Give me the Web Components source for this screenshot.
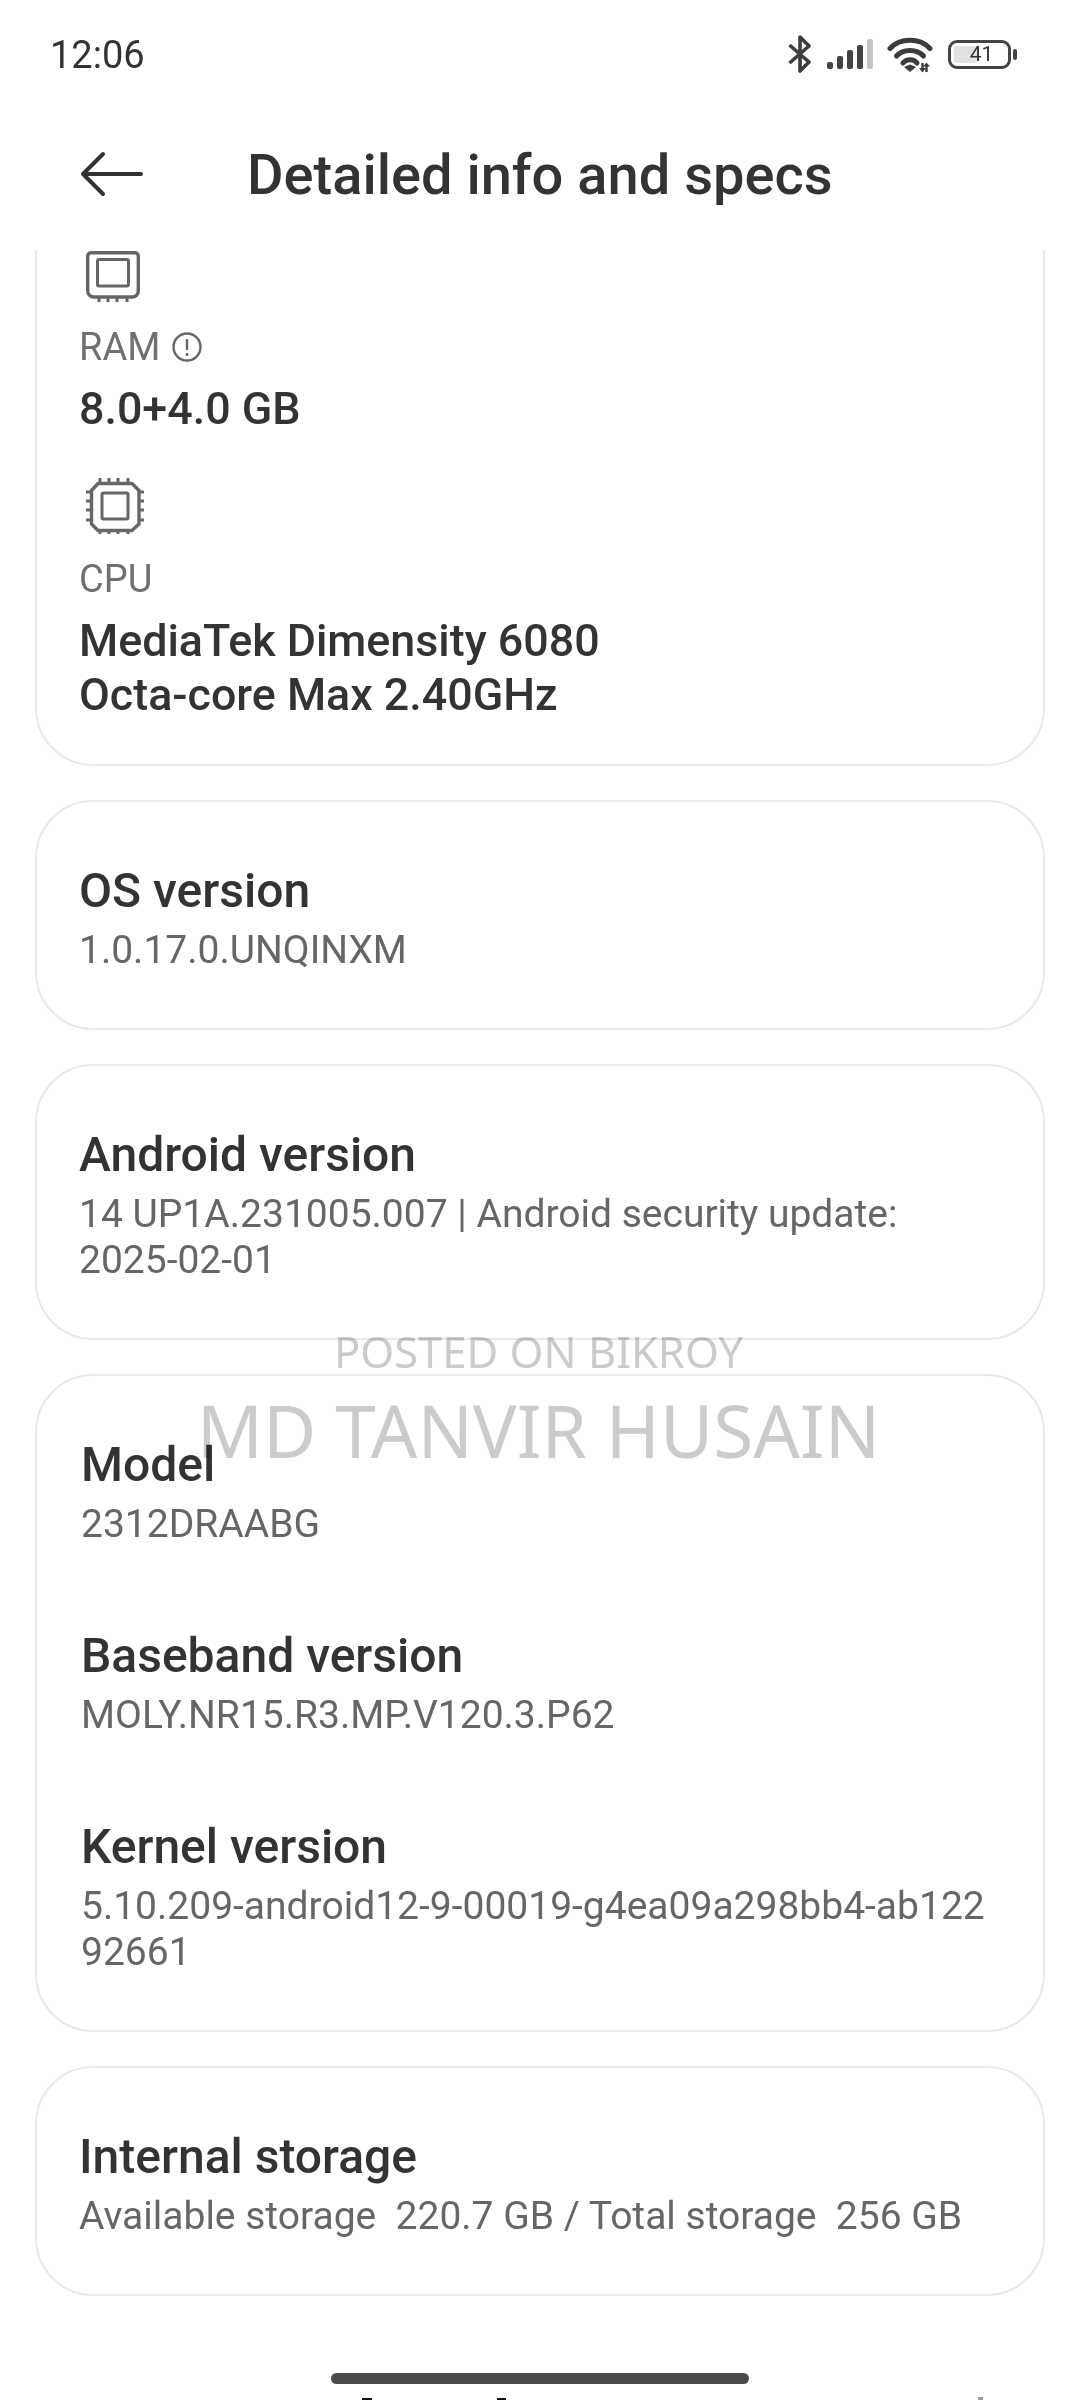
<!DOCTYPE html>
<html>
<head>
<meta charset="utf-8">
<title>Detailed info and specs</title>
<style>
  html, body { margin: 0; padding: 0; background: #fff; }
  body { width: 1080px; height: 2400px; overflow: hidden; position: relative; font-family: Roboto, "Liberation Sans", sans-serif; }
</style>
</head>
<body>
<status-bar></status-bar>
<title-bar>Detailed info and specs</title-bar>
<spec-scroller>
  <spec-card first>
    <hw-item label="RAM" info><svg slot="icon" width="54" height="51" viewBox="0 0 54 51" fill="none" stroke="#666" stroke-width="3.4"><path d="M5 1.7H49a3.3 3.3 0 0 1 3.3 3.3V40a6 6 0 0 1-6 6H7.7a6 6 0 0 1-6-6V5A3.3 3.3 0 0 1 5 1.7Z"/><rect x="11.5" y="8.5" width="31" height="26.5" rx="1.5" stroke-width="3"/><path d="M13 46v5M22 46v5M31 46v5M41 46v5" stroke-width="3"/></svg>8.0+4.0 GB</hw-item>
    <hw-item label="CPU"><svg slot="icon" width="58" height="56" viewBox="0 0 58 56" fill="none" stroke="#666" stroke-width="3.4"><path d="M12 5.5H46L53 12.5V46L46 52.5H12L5.5 46V12.5Z" stroke-linejoin="round"/><rect x="16" y="15" width="26" height="26" rx="1.5" stroke-width="3"/><path d="M14 0v5M23 0v5M32 0v5M42 0v5M14 52v4M23 52v4M32 52v4M42 52v4M0 14h5M0 23h5M0 32h5M0 42h5M53 14h5M53 23h5M53 32h5M53 42h5" stroke-width="3"/></svg>MediaTek Dimensity 6080<br>Octa-core Max 2.40GHz</hw-item>
  </spec-card>
  <spec-card>
    <spec-row name="OS version">1.0.17.0.UNQINXM</spec-row>
  </spec-card>
  <spec-card>
    <spec-row name="Android version">14 UP1A.231005.007 | Android security update:<br>2025-02-01</spec-row>
  </spec-card>
  <spec-card group>
    <spec-row name="Model">2312DRAABG</spec-row>
    <spec-row name="Baseband version">MOLY.NR15.R3.MP.V120.3.P62</spec-row>
    <spec-row name="Kernel version">5.10.209-android12-9-00019-g4ea09a298bb4-ab122<br>92661</spec-row>
  </spec-card>
  <spec-card>
    <spec-row name="Internal storage">Available storage&nbsp; 220.7 GB / Total storage&nbsp; 256 GB</spec-row>
  </spec-card>
</spec-scroller>
<home-bar></home-bar>
<post-watermark></post-watermark>

<script>
class StatusBar extends HTMLElement {
  connectedCallback() {
    this.attachShadow({ mode: 'open' });
    this.shadowRoot.innerHTML = `
      <style>
        :host { display: flex; height: 108px; padding: 0 63px 0 50px; box-sizing: border-box; align-items: center; justify-content: space-between; color: #333; }
        .time { font-size: 38px; padding-top: 2px; }
        .icons { display: flex; align-items: center; }
        svg { display: block; }
        .bt { margin-right: 15px; }
        .sig { margin-right: 14px; }
        .wifi { margin-right: 15px; margin-top: 2px; }
        .batt { position: relative; width: 63px; height: 29px; box-sizing: border-box; border: 3.5px solid #444; border-radius: 9px; display: flex; align-items: center; justify-content: center; font-size: 21px; color: #333; padding-left: 4px; }
        .level { position: absolute; left: 3px; top: 3px; bottom: 3px; width: 23px; background: #e2e2e2; border-radius: 2px; }
        .num { position: relative; }
        .cap { width: 4px; height: 11px; background: #444; border-radius: 2px; margin-left: 2px; }
      </style>
      <span class="time">12:06</span>
      <div class="icons">
        <svg class="bt" width="24" height="38" viewBox="0 0 24 38" fill="none" stroke="#3c3c3c" stroke-width="3.6" stroke-linejoin="round"><path d="M1.5 10L21 27L12 36V2L21 11L1.5 28"/></svg>
        <svg class="sig" width="46" height="30" viewBox="0 0 46 30" fill="#444"><rect x="0" y="23" width="6" height="7" rx="2"/><rect x="10" y="17" width="6" height="13" rx="2"/><rect x="20" y="11" width="6" height="19" rx="2"/><rect x="30" y="6" width="6" height="24" rx="2"/><rect x="40" y="0" width="6" height="30" rx="2" fill="#c4c4c4"/></svg>
        <svg class="wifi" width="46" height="36" viewBox="0 0 46 36" fill="none" stroke="#3c3c3c" stroke-width="5" stroke-linecap="round"><path d="M3 11.5C13 0.5 33 0.5 43 11.5"/><path d="M9.5 19C16 11.5 30 11.5 36.5 19"/><path d="M16 26C19.5 21.5 26.5 21.5 30 26"/><path d="M17 30L23 35L29 30L23 27.5Z" fill="#3c3c3c" stroke="none"/><path d="M32 31h7l-3.5 4.5zM36 29.5l3.5-4 3.5 4z" fill="#3c3c3c" stroke="none"/><path d="M35.5 26V32M39.5 28V35" stroke-width="2.4" stroke-linecap="butt"/></svg>
        <div class="batt"><div class="level"></div><span class="num">41</span></div>
        <div class="cap"></div>
      </div>
    `;
  }
}

class TitleBar extends HTMLElement {
  connectedCallback() {
    this.attachShadow({ mode: 'open' });
    this.shadowRoot.innerHTML = `
      <style>
        :host { display: flex; height: 142px; align-items: center; box-sizing: border-box; padding: 0 0 9px 79px; color: #333; }
        svg { display: block; margin-right: 104px; margin-bottom: 2px; }
        .t { font-size: 56px; font-weight: 500; }
      </style>
      <svg width="64" height="46" viewBox="0 0 64 46" fill="none" stroke="#333" stroke-width="4" stroke-linecap="round" stroke-linejoin="round"><path d="M24 3L4 23L24 43M4 23H62"/></svg>
      <span class="t"><slot></slot></span>
    `;
  }
}

class SpecScroller extends HTMLElement {
  connectedCallback() {
    this.attachShadow({ mode: 'open' });
    this.shadowRoot.innerHTML = `
      <style>
        :host { display: block; height: 2150px; overflow: hidden; box-sizing: border-box; padding: 0 35px; }
        .list { display: flex; flex-direction: column; gap: 34px; margin-top: -60px; }
      </style>
      <div class="list"><slot></slot></div>
    `;
  }
}

class SpecCard extends HTMLElement {
  connectedCallback() {
    this.attachShadow({ mode: 'open' });
    this.shadowRoot.innerHTML = `
      <style>
        :host { display: flex; flex-direction: column; box-sizing: border-box; border: 2px solid #e8e8e8; border-radius: 58px; padding: 61px 20px 55px 42px; background: #fff; }
        :host([first]) { padding-top: 59px; padding-bottom: 42px; gap: 42px; }
        :host([group]) { padding: 61px 20px 55px 44px; gap: 81px; }
      </style>
      <slot></slot>
    `;
  }
}

class HwItem extends HTMLElement {
  connectedCallback() {
    const label = this.getAttribute('label');
    const info = this.hasAttribute('info') ? `<svg width="30" height="30" viewBox="0 0 30 30" fill="none" stroke="#666" stroke-width="2.4"><circle cx="15" cy="15" r="13.5"/><path d="M15 7V18M15 21v3"/></svg>` : '';
    this.attachShadow({ mode: 'open' });
    this.shadowRoot.innerHTML = `
      <style>
        :host { display: block; }
        .icon { padding-left: 7px; }
        ::slotted(svg) { display: block; }
        .l { display: flex; align-items: center; gap: 12px; font-size: 38px; color: #707070; margin-top: 23px; line-height: 44px; }
        .v { font-size: 44.8px; font-weight: 500; color: #333; line-height: 54px; margin-top: 13px; }
      </style>
      <div class="icon"><slot name="icon"></slot></div>
      <div class="l">${label}${info}</div>
      <div class="v"><slot></slot></div>
    `;
  }
}

class SpecRow extends HTMLElement {
  connectedCallback() {
    const name = this.getAttribute('name');
    this.attachShadow({ mode: 'open' });
    this.shadowRoot.innerHTML = `
      <style>
        :host { display: block; }
        .n { font-size: 48px; font-weight: 500; color: #333; line-height: 56px; }
        .d { font-size: 39px; color: #666; line-height: 46px; margin-top: 8px; white-space: nowrap; }
      </style>
      <div class="n">${name}</div>
      <div class="d"><slot></slot></div>
    `;
  }
}

class HomeBar extends HTMLElement {
  connectedCallback() {
    this.attachShadow({ mode: 'open' });
    this.shadowRoot.innerHTML = `
      <style>
        :host { position: absolute; left: 0; right: 0; top: 2373px; bottom: 0; display: flex; justify-content: center; }
        .pill { width: 418px; height: 11px; border-radius: 6px; background: #4a4a4a; }
        i { position: absolute; bottom: 0; height: 2px; background: #111; }
        .m1 { left: 362px; width: 10px; }
        .m2 { left: 497px; width: 9px; }
        .m3 { left: 978px; width: 5px; height: 3px; background: #999; }
      </style>
      <div class="pill"></div>
      <i class="m1"></i><i class="m2"></i><i class="m3"></i>
    `;
  }
}

class PostWatermark extends HTMLElement {
  connectedCallback() {
    this.attachShadow({ mode: 'open' });
    this.shadowRoot.innerHTML = `
      <style>
        :host { position: absolute; left: 0; right: 0; top: 1322px; padding-right: 3px; display: flex; flex-direction: column; align-items: center; color: #c9cbcd; font-family: "Noto Sans", "Open Sans", sans-serif; pointer-events: none; mix-blend-mode: multiply; }
        .a { font-size: 43.5px; line-height: 58px; }
        .b { font-size: 73px; line-height: 100px; }
      </style>
      <div class="a">POSTED ON BIKROY</div>
      <div class="b">MD TANVIR HUSAIN</div>
    `;
  }
}

customElements.define('status-bar', StatusBar);
customElements.define('title-bar', TitleBar);
customElements.define('spec-scroller', SpecScroller);
customElements.define('spec-card', SpecCard);
customElements.define('hw-item', HwItem);
customElements.define('spec-row', SpecRow);
customElements.define('home-bar', HomeBar);
customElements.define('post-watermark', PostWatermark);
</script>
</body>
</html>
